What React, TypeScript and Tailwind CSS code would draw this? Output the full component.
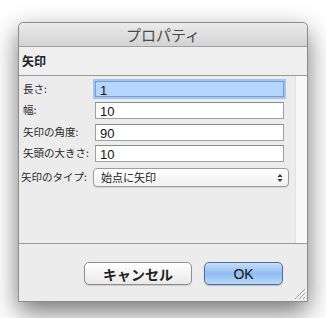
import React from "react";

const jp = { fontFamily: '"Noto Sans CJK JP", "Noto Sans", sans-serif' };

function Field({ label, value, focused }: { label: string; value: string; focused?: boolean }) {
  return (
    <div className="flex items-center h-[16px]">
      <div className="w-[76px] shrink-0 whitespace-nowrap text-[10.5px] text-[#2a2a2a] leading-none pl-[4px]" style={jp}>{label}</div>
      <div
        className={
          focused
            ? "w-[189px] h-[16px] bg-[#b6d6ff] border border-[#6d9fd8] shadow-[0_0_0_2px_rgba(120,170,230,0.6)] flex items-center pl-[4px]"
            : "w-[189px] h-[17px] bg-white border border-[#a0a0a0] border-t-[#8a8a8a] flex items-center pl-[4px]"
        }
      >
        <span className="text-[13px] text-[#111] leading-none mt-[2px]" style={{ fontFamily: '"Liberation Sans", Arial, sans-serif' }}>{value}</span>
      </div>
    </div>
  );
}

export default function App() {
  return (
    <div className="w-[326px] h-[318px] bg-white pl-[18px] pt-[22px] overflow-hidden">
      <div className="w-[290px] h-[280px] bg-[#ececec] rounded-t-[5px] border border-[#8c8c8c] shadow-[0_10px_26px_rgba(0,0,0,0.55)] flex flex-col">
        <div className="h-[24px] rounded-t-[5px] bg-gradient-to-b from-[#ebebeb] to-[#d3d3d3] border-b border-[#a0a0a0] flex items-center justify-center">
          <span className="text-[15px] text-[#4a4a4a] leading-none" style={jp}>プロパティ</span>
        </div>
        <div className="h-[29px] bg-[#efefef] border-b border-[#9a9a9a] flex items-center pl-[3px]">
          <span className="text-[12px] font-bold text-[#222] leading-none" style={jp}>矢印</span>
        </div>
        <div className="h-[168px] flex border-b border-[#999]">
          <div className="flex-1 flex flex-col pt-[5px] gap-[5.5px]">
            <Field label="長さ:" value="1" focused />
            <Field label="幅:" value="10" />
            <Field label="矢印の角度:" value="90" />
            <Field label="矢頭の大きさ:" value="10" />
            <div className="flex items-center h-[19px] mt-[1px]">
              <div className="w-[74px] shrink-0 whitespace-nowrap text-[10.5px] text-[#2a2a2a] leading-none pl-[2px]" style={jp}>矢印のタイプ:</div>
              <div className="w-[196px] h-[19px] bg-gradient-to-b from-white to-[#f1f1f1] border border-[#9c9c9c] rounded-[4px] flex items-center justify-between pl-[7px] pr-[5px] shadow-[0_1px_1px_rgba(0,0,0,0.1)]">
                <span className="text-[11px] text-[#222] leading-none" style={jp}>始点に矢印</span>
                <svg width="6" height="10" viewBox="0 0 6 10">
                  <path d="M0.5 4 L3 1 L5.5 4 Z" fill="#333" />
                  <path d="M0.5 6 L3 9 L5.5 6 Z" fill="#333" />
                </svg>
              </div>
            </div>
          </div>
          <div className="w-[12px] bg-[#f9f9f9] border-l border-[#e2e2e2]" />
        </div>
        <div className="flex-1 relative flex items-start justify-end pt-[18px] pr-[24px] gap-[12px]">
          <div className="w-[108px] h-[23px] rounded-[5px] border border-[#8e8e8e] bg-gradient-to-b from-white to-[#e9e9e9] flex items-center justify-center shadow-[0_1px_1px_rgba(0,0,0,0.15)]">
            <span className="text-[14px] font-bold text-[#222] leading-none" style={jp}>キャンセル</span>
          </div>
          <div className="w-[79px] h-[23px] rounded-[5px] border border-[#4f6f96] bg-gradient-to-b from-[#c6defa] via-[#8ebdf1] to-[#bad8fa] flex items-center justify-center shadow-[0_1px_1px_rgba(0,0,0,0.2)]">
            <span className="text-[14px] text-[#111] leading-none" style={{ fontFamily: '"Liberation Sans", Arial, sans-serif' }}>OK</span>
          </div>
          <svg className="absolute right-[1px] bottom-[1px]" width="14" height="14" viewBox="0 0 14 14">
            <path d="M13 3 L3 13 M13 7 L7 13 M13 11 L11 13" stroke="#9a9a9a" strokeWidth="1" />
            <path d="M13 4 L4 13 M13 8 L8 13" stroke="#fff" strokeWidth="1" />
          </svg>
        </div>
      </div>
    </div>
  );
}
